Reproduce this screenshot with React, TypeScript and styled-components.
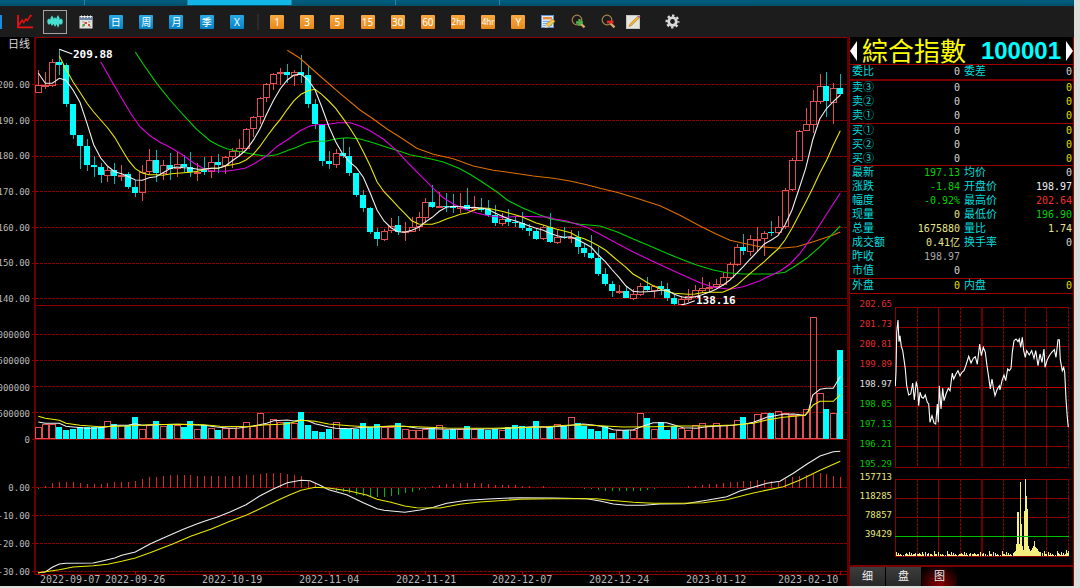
import React from 'react';
import styled, { createGlobalStyle, css } from 'styled-components';

const MONO = '"DejaVu Sans Mono", "Noto Sans CJK SC", monospace';
const CJK = '"Liberation Sans", "Noto Sans CJK SC", sans-serif';

const GlobalStyle = createGlobalStyle`
  *, *::before, *::after { box-sizing: border-box; }
  body { margin: 0; background: #dde1de; font-family: ${CJK}; }
  button { font: inherit; color: inherit; background: none; border: 0; padding: 0; cursor: pointer; }
`;

/* ---------- data ---------- */

type Kind = 'r' | 'c';
type Candle = [Kind, number, number, number, number];

// Direction, high, body top, body bottom, low; heights in thirds of a pixel.
const CANDLES: Candle[] = [
  ['r', 90, 136, 158, 158], ['r', 95, 135, 137, 147], ['r', 58, 67, 137, 140], ['c', 28, 66, 74, 105],
  ['c', 69, 75, 191, 201], ['c', 192, 192, 285, 297], ['c', 285, 285, 318, 386], ['c', 297, 317, 375, 392],
  ['c', 348, 375, 381, 411], ['c', 369, 380, 406, 429], ['r', 380, 390, 409, 427], ['c', 369, 390, 408, 432],
  ['r', 375, 404, 410, 422], ['c', 396, 402, 440, 448], ['c', 420, 441, 459, 470], ['r', 376, 395, 460, 482],
  ['r', 326, 361, 395, 405], ['c', 331, 360, 399, 425], ['r', 360, 376, 401, 419], ['c', 339, 375, 388, 419],
  ['r', 336, 373, 388, 410], ['c', 345, 373, 381, 395], ['c', 336, 381, 396, 410], ['r', 368, 396, 399, 424],
  ['c', 350, 387, 395, 405], ['r', 348, 367, 395, 414], ['c', 342, 365, 375, 399], ['r', 348, 350, 379, 402],
  ['r', 325, 332, 352, 385], ['r', 297, 324, 335, 350], ['r', 264, 268, 326, 330], ['r', 228, 232, 268, 292],
  ['r', 171, 175, 232, 251], ['r', 130, 133, 175, 185], ['r', 98, 101, 133, 150], ['r', 85, 97, 100, 136],
  ['c', 71, 96, 105, 130], ['r', 91, 97, 107, 138], ['c', 45, 96, 105, 130], ['c', 76, 105, 191, 203],
  ['c', 177, 191, 253, 267], ['c', 253, 253, 364, 378], ['c', 333, 364, 371, 386], ['r', 326, 340, 374, 383],
  ['c', 293, 339, 349, 355], ['c', 322, 349, 399, 408], ['c', 399, 399, 465, 470], ['c', 451, 465, 505, 516],
  ['c', 500, 505, 575, 581], ['c', 563, 575, 596, 617], ['r', 566, 573, 599, 602], ['r', 534, 557, 574, 578],
  ['c', 529, 556, 577, 585], ['r', 545, 574, 577, 602], ['r', 530, 560, 575, 577], ['r', 516, 532, 562, 573],
  ['r', 475, 487, 533, 548], ['c', 435, 486, 500, 505], ['r', 455, 497, 502, 503], ['c', 460, 497, 500, 517],
  ['c', 463, 499, 503, 520], ['r', 459, 497, 507, 518], ['c', 445, 495, 506, 510], ['r', 467, 502, 508, 512],
  ['c', 473, 504, 510, 516], ['c', 479, 507, 525, 530], ['c', 495, 524, 550, 557], ['r', 520, 537, 551, 558],
  ['c', 508, 538, 545, 557], ['c', 530, 545, 548, 560], ['c', 515, 548, 563, 570], ['c', 551, 563, 573, 587],
  ['c', 565, 572, 597, 600], ['r', 556, 560, 598, 600], ['c', 520, 560, 605, 608], ['r', 571, 591, 608, 613],
  ['c', 560, 591, 594, 598], ['r', 570, 590, 596, 608], ['c', 573, 591, 620, 642], ['c', 608, 623, 640, 651],
  ['c', 586, 640, 653, 657], ['c', 622, 654, 702, 707], ['c', 685, 702, 731, 738], ['c', 723, 731, 753, 771],
  ['r', 735, 752, 756, 762], ['c', 737, 752, 774, 775], ['r', 747, 762, 776, 780], ['r', 729, 737, 764, 768],
  ['c', 712, 737, 749, 753], ['r', 735, 739, 752, 773], ['c', 723, 739, 748, 764], ['c', 730, 748, 773, 782],
  ['c', 762, 774, 791, 796], ['r', 768, 778, 794, 795], ['r', 748, 768, 779, 785], ['r', 735, 750, 770, 775],
  ['r', 712, 745, 752, 758], ['r', 727, 741, 748, 755], ['r', 718, 732, 742, 745], ['r', 697, 712, 734, 738],
  ['r', 667, 672, 714, 718], ['r', 612, 622, 674, 678], ['c', 582, 622, 634, 645], ['r', 586, 598, 637, 648],
  ['r', 561, 596, 600, 635], ['r', 573, 578, 598, 648], ['c', 543, 576, 580, 588], ['r', 528, 560, 580, 586],
  ['r', 445, 449, 562, 568], ['r', 355, 361, 450, 452], ['r', 269, 272, 362, 362], ['r', 205, 253, 273, 273],
  ['r', 150, 184, 255, 279], ['r', 102, 138, 186, 192], ['c', 95, 137, 184, 231], ['r', 130, 145, 188, 252],
  ['c', 102, 144, 162, 165],
];

const VOLUMES = [
  382, 372, 371, 382, 390, 387, 382, 382, 382, 380, 364, 372, 376, 375, 350, 388, 376, 363, 378, 373,
  375, 381, 363, 388, 374, 385, 389, 385, 385, 377, 367, 378, 338, 373, 356, 366, 366, 370, 336, 374,
  394, 397, 386, 367, 385, 386, 387, 369, 382, 371, 382, 380, 369, 388, 391, 391, 388, 384, 374, 389,
  386, 387, 378, 388, 387, 390, 386, 389, 380, 376, 378, 382, 363, 377, 382, 371, 379, 352, 369, 379,
  387, 394, 378, 400, 391, 390, 389, 340, 355, 387, 366, 389, 379, 385, 390, 374, 370, 378, 370, 374,
  376, 361, 350, 368, 343, 340, 339, 334, 340, 345, 345, 328, 52, 278, 327, 340, 150,
];

const HISTOGRAM = [
  567, 558, 549, 545, 545, 546, 549, 552, 552, 552, 549, 547, 545, 545, 543, 537, 532, 531, 528, 526,
  526, 526, 526, 529, 529, 529, 529, 529, 529, 528, 526, 525, 521, 519, 519, 519, 521, 524, 529, 540,
  550, 558, 568, 572, 575, 579, 584, 588, 591, 591, 591, 588, 585, 580, 575, 571, 567, 558, 555, 552,
  551, 549, 549, 549, 549, 552, 555, 555, 555, 555, 558, 558, 562, 558, 562, 562, 562, 562, 562, 566,
  566, 569, 572, 573, 573, 573, 573, 573, 569, 566, 562, 562, 562, 562, 558, 558, 555, 552, 552, 549,
  546, 545, 542, 542, 540, 540, 543, 545, 537, 532, 527, 524, 520, 519, 521, 527, 532,
];

const MA5 = '115,99 136,130 157,130 178,115 198,121 219,150 240,187 261,250 281,314 302,354 323,379 344,395 365,401 386,410 406,420 427,421 447,413 468,410 489,398 509,386 530,381 551,383 572,384 593,388 613,387 634,385 655,385 676,378 696,363 717,348 738,330 759,302 779,268 800,222 821,180 841,146 862,120 882,105 903,102 924,119 945,149 965,200 986,258 1007,305 1027,340 1048,365 1069,383 1090,412 1111,460 1131,510 1152,543 1173,563 1194,575 1214,577 1235,571 1256,562 1277,545 1297,532 1318,514 1339,502 1360,499 1381,500 1401,503 1422,502 1443,504 1464,508 1485,519 1505,528 1526,537 1547,543 1567,550 1588,558 1609,565 1630,571 1650,580 1671,587 1692,592 1712,590 1733,600 1753,610 1774,622 1795,645 1816,665 1837,690 1857,712 1878,738 1899,754 1920,756 1940,755 1962,754 1982,751 2002,751 2023,763 2044,770 2065,774 2085,770 2106,764 2127,757 2148,748 2168,736 2189,721 2210,700 2230,680 2251,657 2272,635 2293,612 2314,600 2334,587 2355,555 2376,510 2397,447 2417,385 2438,300 2459,237 2480,205 2500,185 2521,165';
const MA10 = '178,48 198,88 219,125 240,157 261,190 281,216 302,240 323,264 344,292 365,328 386,362 406,386 427,399 447,404 468,404 489,406 509,402 530,400 551,398 572,397 593,394 613,388 634,385 655,385 676,378 696,374 717,370 738,360 759,344 779,320 800,290 821,262 841,238 862,208 882,182 903,163 924,152 945,148 965,163 986,183 1007,205 1027,232 1048,262 1069,295 1090,335 1111,378 1131,425 1152,455 1173,477 1194,500 1214,520 1235,542 1256,552 1277,553 1297,553 1318,546 1339,537 1360,530 1381,523 1401,519 1422,510 1443,504 1464,505 1485,509 1505,514 1526,519 1547,525 1567,531 1588,540 1609,549 1630,555 1650,562 1671,568 1692,573 1712,578 1733,590 1753,596 1774,606 1795,617 1816,630 1837,648 1857,665 1878,682 1899,702 1920,714 1940,727 1961,738 1982,748 2003,755 2023,760 2044,761 2065,763 2085,762 2106,758 2127,757 2168,757 2189,748 2210,736 2230,718 2251,700 2272,682 2293,665 2314,645 2334,627 2355,600 2376,565 2397,525 2417,487 2438,445 2459,400 2480,360 2500,315 2521,272';
const MA20 = '302,65 336,125 365,175 395,225 420,260 450,287 480,307 510,322 545,343 580,368 613,387 640,393 675,394 700,391 735,385 765,370 800,347 830,320 870,294 900,272 930,258 950,254 985,253 1015,248 1050,248 1080,258 1110,272 1150,297 1190,332 1230,375 1270,415 1300,445 1330,473 1360,492 1395,508 1430,519 1465,527 1500,532 1530,531 1560,529 1610,530 1645,531 1660,536 1700,543 1730,553 1760,562 1800,583 1850,610 1900,636 1950,660 2000,683 2050,706 2100,728 2140,742 2190,748 2230,740 2280,722 2340,693 2370,672 2400,640 2440,585 2480,522 2521,459';
const MA30 = '406,36 430,73 470,130 510,180 550,225 590,268 630,302 655,316 680,326 715,334 760,343 800,349 830,344 865,331 890,322 920,308 945,304 980,303 1010,296 1040,293 1080,297 1120,308 1160,322 1190,331 1230,344 1260,350 1290,356 1330,366 1375,384 1410,403 1450,428 1490,455 1525,482 1570,505 1610,521 1650,536 1700,546 1740,553 1800,558 1850,575 1900,597 1950,618 2000,640 2050,660 2090,675 2140,690 2180,698 2230,702 2320,702 2355,697 2380,682 2420,655 2460,620 2490,590 2521,558';
const MA60 = '862,31 900,55 960,108 1020,160 1080,210 1120,237 1160,266 1210,298 1250,325 1300,343 1360,356 1420,378 1480,391 1540,399 1600,408 1660,415 1710,423 1760,434 1800,445 1850,457 1910,475 1980,497 2040,526 2100,558 2150,583 2190,601 2240,612 2280,620 2340,625 2390,620 2440,605 2500,585 2521,576';
const VOL_MA5 = '115,366 136,370 178,370 198,379 219,381 261,385 290,384 323,380 344,376 386,375 406,371 427,376 468,374 530,373 572,374 613,376 650,381 690,385 717,384 759,378 779,374 800,370 821,362 862,360 882,363 903,360 924,362 945,371 965,376 986,381 1007,385 1048,386 1090,382 1131,381 1173,379 1214,379 1250,384 1300,386 1340,388 1500,386 1540,383 1600,380 1640,382 1700,377 1750,372 1780,375 1815,381 1840,389 1870,391 1900,389 1930,378 1960,368 2000,368 2020,374 2050,383 2090,385 2120,380 2180,377 2230,373 2260,367 2300,352 2350,343 2380,342 2415,346 2425,335 2438,285 2460,268 2480,265 2500,265 2521,229';
const VOL_MA10 = '115,349 136,355 178,361 198,370 240,376 300,380 380,378 450,374 540,373 610,374 660,379 740,380 790,375 840,373 862,371 903,361 945,364 986,372 1048,377 1110,381 1180,378 1250,380 1340,384 1480,385 1560,383 1640,380 1700,376 1740,374 1800,377 1870,381 1960,380 2040,378 2120,378 2200,375 2260,370 2300,360 2350,352 2415,346 2440,315 2460,304 2500,304 2521,284';
const DIF = '115,818 136,816 157,802 178,792 198,790 280,789 310,782 344,774 365,766 406,756 450,732 490,714 550,688 590,672 613,664 650,652 690,636 738,614 779,588 821,566 862,548 903,541 930,542 960,556 986,569 1040,584 1090,608 1131,626 1152,631 1214,637 1260,630 1300,622 1340,610 1400,601 1480,596 1560,593 1660,594 1760,596 1800,603 1840,612 1880,616 1930,616 1980,612 2055,611 2120,601 2180,590 2220,573 2260,562 2300,550 2340,544 2380,520 2420,493 2460,468 2500,455 2521,454';
const DEA = '115,818 136,815 178,809 219,801 280,797 323,793 365,784 406,774 450,758 520,731 572,709 634,687 690,664 740,645 780,626 830,602 870,584 903,571 945,562 986,564 1048,573 1100,585 1131,598 1173,607 1214,618 1250,623 1320,624 1380,613 1440,606 1560,598 1660,596 1790,596 1830,601 1900,607 1960,610 2050,610 2110,608 2180,599 2260,579 2350,560 2400,540 2460,511 2521,484';
const INTRADAY = '166,292 168,248 170,130 174,93 177,158 180,140 184,172 188,185 192,212 196,240 200,290 206,318 212,315 218,282 223,333 229,278 233,300 236,350 240,310 245,325 250,328 256,318 262,340 266,345 270,400 276,380 282,402 287,405 292,345 295,400 298,290 303,360 308,298 312,335 318,315 325,298 330,305 337,252 341,270 348,255 354,245 360,260 366,250 372,245 378,228 386,202 393,222 400,208 406,203 412,226 416,190 419,165 424,200 430,175 436,190 441,230 446,265 451,300 456,270 460,295 465,320 472,300 478,290 480,303 486,275 492,258 497,275 503,240 508,245 513,238 517,190 522,155 528,150 534,158 538,150 542,175 547,145 551,185 556,205 560,185 568,198 575,185 582,208 587,185 594,230 600,195 606,220 612,180 615,235 622,212 628,200 635,190 643,182 648,205 654,152 658,152 661,212 667,245 671,235 674,250 678,330 682,385 685,414';

// Traded volume by the minute: position and height in pixels.
const SPIKES: [number, number][] = [
  [118, 3], [119, 4], [120, 5], [121, 12], [122, 44], [123, 44], [124, 12], [125, 74], [126, 32], [127, 10], [128, 6],
  [129, 45], [130, 77], [131, 60], [132, 47], [133, 10], [134, 7], [135, 5], [136, 6], [137, 8], [138, 10],
  [139, 15], [140, 9], [141, 8], [142, 7], [143, 5], [144, 4], [145, 4], [147, 3], [149, 3], [171, 6], [173, 5],
];
const TICKS = [4, 2, 3, 1, 0, 2, 0, 1, 2, 2, 0, 2, 1, 2, 3, 0, 1, 5, 2, 0, 3, 1, 4];

/* ---------- chart helpers ---------- */

const PLOT_W = 815;
const PLOT_LEFT = 32;
const candleX = (i: number) => Math.round((115 + 20.74 * i) / 3 - PLOT_LEFT);
const place = (points: string, left: number, top: number) =>
  points
    .split(' ')
    .map((p) => {
      const [x, y] = p.split(',').map(Number);
      return `${(x / 3 - left).toFixed(1)},${(y / 3 + top).toFixed(1)}`;
    })
    .join(' ');

const RED = '#8c0000';
const UP = '#e05050';
const DOWN = '#00ffff';

const Plot = styled.svg<{ $h: number }>`
  display: block;
  width: 100%;
  height: ${(p) => p.$h}px;
  shape-rendering: crispEdges;
  & * { vector-effect: non-scaling-stroke; }
  & polyline { shape-rendering: auto; stroke-width: 1.1; }
`;

const Grid = ({ ys, width, from = 0 }: { ys: number[]; width: number; from?: number }) => (
  <g stroke={RED} strokeDasharray="3 1">
    {ys.map((y) => <line key={y} x1={from} x2={width} y1={y} y2={y} />)}
  </g>
);

const Curve = ({ d, color, top }: { d: string; color: string; top: number }) => (
  <polyline points={place(d, PLOT_LEFT, top)} fill="none" stroke={color} />
);

const PriceChart = () => {
  const top = 3;
  const y = (v: number) => Math.round(v / 3 + top);
  return (
    <Plot $h={269} viewBox={`0 0 ${PLOT_W} 269`} preserveAspectRatio="none" role="img" aria-label="日线">
      <Grid ys={[47.5, 83.5, 119.5, 154.5, 190.5, 226.5, 261.5]} width={PLOT_W} />
      <path d={`M3 .5H${PLOT_W}M3 268.5H${PLOT_W}`} stroke={RED} />
      <path d="M3 0V269" stroke="#6c0000" strokeWidth="2" />
      {CANDLES.map(([kind, hi, a, b, lo], i) => {
        const x = candleX(i);
        const bodyH = Math.max(1, y(b) - y(a));
        return kind === 'c' ? (
          <g key={i}>
            <path d={`M${x + 0.5} ${y(hi)}V${y(lo)}`} stroke="#00b8b8" />
            <rect x={x - 3} y={y(a)} width="6" height={bodyH} fill={DOWN} />
          </g>
        ) : (
          <g key={i} stroke={UP} fill="none">
            <path d={`M${x + 0.5} ${y(hi)}V${y(a)}M${x + 0.5} ${y(b)}V${y(lo)}`} />
            <rect x={x - 2.5} y={y(a) + 0.5} width="6" height={Math.max(0.5, bodyH - 1)} />
          </g>
        );
      })}
      <Curve d={MA60} color="#dc7000" top={top} />
      <Curve d={MA30} color="#00d000" top={top} />
      <Curve d={MA20} color="#e000e0" top={top} />
      <Curve d={MA10} color="#e8e800" top={top} />
      <Curve d={MA5} color="#f0f0f0" top={top} />
      <Curve d="178,28 217,42" color="#ffffff" top={top} />
      <Curve d="2044,794 2060,791 2084,782" color="#ffffff" top={top} />
    </Plot>
  );
};

const VolumeChart = () => (
  <Plot $h={134} viewBox={`0 0 ${PLOT_W} 134`} preserveAspectRatio="none" role="img" aria-label="成交量">
    <Grid ys={[28.5, 54.5, 80.5, 106.5]} width={PLOT_W} />
    <path d="M3 0V134" stroke="#6c0000" strokeWidth="2" />
    {VOLUMES.map((v, i) => {
      const x = candleX(i);
      const y = Math.round((v - 18) / 3);
      return CANDLES[i][0] === 'c' ? (
        <rect key={i} x={x - 3} y={y} width="6" height={133 - y} fill={DOWN} />
      ) : (
        <rect key={i} x={x - 2.5} y={y + 0.5} width="6" height={132 - y} fill="none" stroke={UP} />
      );
    })}
    <path d={`M0 133.5H${PLOT_W}`} stroke={RED} />
    <Curve d={VOL_MA5} color="#f0f0f0" top={-6} />
    <Curve d={VOL_MA10} color="#f0f000" top={-6} />
  </Plot>
);

const MacdChart = () => (
  <Plot $h={135} viewBox={`0 0 ${PLOT_W} 135`} preserveAspectRatio="none" role="img" aria-label="MACD">
    <Grid ys={[47.5, 75.5, 103.5, 131.5]} width={PLOT_W} />
    <path d="M3 0V135" stroke="#6c0000" strokeWidth="2" />
    {HISTOGRAM.map((v, i) => {
      if (v === 562) return null;
      const x = candleX(i) + 0.5;
      return <path key={i} d={`M${x} 47.5V${(v - 420) / 3}`} stroke={v > 562 ? '#00b400' : '#d82424'} />;
    })}
    <path d={`M3 134.5H${PLOT_W}`} stroke={RED} />
    {[0, 14, 28, 42, 56, 70, 84, 98, 116].map((i) => (
      <path key={i} d={`M${candleX(i) + 0.5} 131V135`} stroke="#b00000" />
    ))}
    <Curve d={DIF} color="#f0f0f0" top={-140} />
    <Curve d={DEA} color="#e8e800" top={-140} />
  </Plot>
);

const V_LINES = [22, 65, 108, 130, 151, 173];
const MINI_W = 174;

const MiniVerticals = ({ from, to }: { from: number; to: number }) => (
  <>
    <path d={V_LINES.map((x) => `M${x + 0.5} ${from}V${to}`).join('')} stroke={RED} strokeDasharray="3 1" />
    <path d={`M.5 ${from}V${to}M43.5 ${from}V${to}`} stroke={RED} />
    <path d={`M87 ${from}V${to}`} stroke="#6c0000" strokeWidth="2" />
  </>
);

const MiniPrice = () => (
  <Plot $h={170} viewBox={`0 0 ${MINI_W} 170`} preserveAspectRatio="none" role="img" aria-label="分时走势">
    <path d={[8, 28, 47, 67, 107, 127, 147, 168].map((y) => `M0 ${y + 0.5}H${MINI_W}`).join('')} stroke={RED} />
    <path d={`M0 88.5H${MINI_W}`} stroke="#c00000" />
    <MiniVerticals from={8} to={169} />
    <polyline points={place(INTRADAY, 55, -10)} fill="none" stroke="#ffffff" />
  </Plot>
);

const MiniVolume = () => (
  <Plot $h={90} viewBox={`0 0 ${MINI_W} 90`} preserveAspectRatio="none" role="img" aria-label="分时成交量">
    <path d={[10, 29, 48, 87].map((y) => `M0 ${y + 0.5}H${MINI_W}`).join('')} stroke={RED} />
    <MiniVerticals from={10} to={88} />
    <g fill="#f4f080">
      {Array.from({ length: 172 }, (_, i) => {
        const h = TICKS[(i * 7 + Math.floor(i / 9)) % TICKS.length];
        return h ? <rect key={i} x={i + 1} y={87 - h} width="1" height={h} /> : null;
      })}
      {SPIKES.map(([x, h], i) => <rect key={`s${i}`} x={x} y={87 - h} width="1" height={h} />)}
    </g>
    <path d={`M0 67.5H${MINI_W}`} stroke="#00c000" />
  </Plot>
);

/* ---------- page frame ---------- */

const Shell = styled.div`
  padding: 0 6px 2px 0;
  background: #dde1de;
`;

const Frame = styled.div`
  background: #000;
  overflow: hidden;
`;

const TabStrip = styled.div`
  display: flex;
  height: 6px;
  background: linear-gradient(#005f80, #004e68);
`;

const StripTab = styled.div<{ $w: number; $active?: boolean }>`
  width: ${(p) => p.$w}px;
  height: 5px;
  border-right: 1px solid #1e86ac;
  ${(p) => p.$active && css`background: #12b6e6;`}
`;

const Toolbar = styled.div`
  display: flex;
  align-items: center;
  height: 31px;
  background: #1c1c1c;
`;

const ToolGroup = styled.div<{ $w: number }>`
  display: flex;
  justify-content: space-between;
  width: ${(p) => p.$w}px;
  flex: none;
`;

const ClippedTool = styled.button`
  width: 2px;
  height: 14px;
  margin-right: 11px;
  background: #1c8be0;
`;

const Divider = styled.div`
  width: 2px;
  height: 16px;
  margin: 0 6px 0 8px;
  background: #2a2a2a;
`;

const ToolButton = styled.button<{ $on?: boolean; $push?: boolean }>`
  display: grid;
  place-items: center;
  flex: none;
  width: 24px;
  height: 24px;
  border: 1px solid ${(p) => (p.$on ? '#a4a4a4' : 'transparent')};
  ${(p) => p.$on && css`background: #242424;`}
  ${(p) => p.$push && css`margin-left: 15px;`}
  svg { display: block; }
`;

const Chip = styled.span<{ $tone: 'blue' | 'orange'; $small?: boolean }>`
  display: block;
  width: 14px;
  height: 14px;
  border-radius: 1px;
  background: ${(p) => (p.$tone === 'blue' ? 'linear-gradient(#2aaae4, #0583c4)' : 'linear-gradient(#f8a840, #e88a1c)')};
  color: #fff;
  font: ${(p) => (p.$small ? 8 : 10)}px/14px "Noto Sans", "Noto Sans CJK SC", sans-serif;
  text-align: center;
  white-space: nowrap;
`;

const Workspace = styled.main`
  display: grid;
  grid-template-columns: minmax(0, 1fr) 225px;
`;

const ChartArea = styled.section`
  display: grid;
  grid-template-columns: 32px minmax(0, 1fr);
  border-right: 2px solid #5c0000;
`;

const AxisColumn = styled.div`
  display: flex;
  flex-direction: column;
  overflow: hidden;
  padding-right: 2px;
  color: #b8b8b8;
  font: 9px/14px ${MONO};
`;

const PeriodName = styled.div`
  display: flex;
  justify-content: flex-end;
  margin-bottom: 27px;
  color: #d8d8d8;
  font: 11px/14px ${CJK};
`;

const Scale = styled.div<{ $h: number; $after?: number }>`
  display: flex;
  flex-direction: column;
  justify-content: space-between;
  align-items: flex-end;
  height: ${(p) => p.$h}px;
  margin-bottom: ${(p) => p.$after ?? 0}px;
`;

const Plots = styled.div`
  position: relative;
  min-width: 0;
`;

const Marker = styled.span<{ $x: number; $y: number }>`
  position: absolute;
  left: ${(p) => (p.$x / PLOT_W) * 100}%;
  top: ${(p) => p.$y}px;
  color: #fff;
  font: bold 11px/14px ${MONO};
`;

const Dates = styled.div`
  display: grid;
  grid-template-columns: 65fr 97fr 97fr 97fr 96fr 97fr 97fr 92fr 69fr;
  height: 11px;
  padding-left: 8px;
  color: #b8b8b8;
  font: 10px/9px ${MONO};
  white-space: nowrap;
`;

/* ---------- quote panel ---------- */

const Panel = styled.aside`
  display: flex;
  flex-direction: column;
  border-left: 1px solid #7a0000;
  border-right: 1px solid #a00000;
`;

const Title = styled.header`
  display: flex;
  align-items: center;
  justify-content: space-between;
  height: 28px;
  border-bottom: 1px solid #a00000;
`;

const Arrow = styled.button`
  width: 7px;
  svg { display: block; }
`;

const IndexName = styled.h1`
  height: 26px;
  margin: 0;
  color: #ffff00;
  font: 26px/23px "Noto Sans CJK TC", sans-serif;
`;

const IndexCode = styled.span`
  margin-left: 10px;
  color: #00ffff;
  font: bold 24px/26px "Liberation Sans", sans-serif;
`;

const Quotes = styled.dl<{ $thick?: boolean }>`
  display: grid;
  grid-template-columns: 1fr 1fr;
  column-gap: 4px;
  margin: 0;
  padding: 0 1px 0 2px;
  border-bottom: ${(p) => (p.$thick ? 2 : 1)}px solid ${(p) => (p.$thick ? '#780000' : '#a00000')};
`;

const Quote = styled.div`
  display: flex;
  justify-content: space-between;
  height: 14px;
`;

const QuoteName = styled.dt`
  color: #00dcdc;
  font: 11px/12px ${CJK};
`;

const QuoteValue = styled.dd<{ $color: string }>`
  margin: 0;
  color: ${(p) => p.$color};
  font: 10px/13px ${MONO};
`;

const Book = styled.table`
  width: 100%;
  table-layout: fixed;
  border-collapse: collapse;
  border-bottom: 1px solid #a00000;
`;

const BookSide = styled.th`
  width: 54px;
  height: 14px;
  padding: 0 0 0 2px;
  text-align: left;
  vertical-align: top;
  color: #00dcdc;
  font: 11px/12px ${CJK};
`;

const BookCell = styled.td<{ $color: string; $w?: number }>`
  ${(p) => p.$w && css`width: ${p.$w}px;`}
  padding: 0 1px 0 0;
  text-align: right;
  vertical-align: top;
  color: ${(p) => p.$color};
  font: 10px/13px ${MONO};
`;

const MiniRow = styled.div<{ $top: number }>`
  display: grid;
  grid-template-columns: 42px minmax(0, 1fr);
  column-gap: 3px;
  padding: ${(p) => p.$top}px 4px 0 0;
`;

const MiniScale = styled.div<{ $h: number; $top?: number }>`
  display: flex;
  flex-direction: column;
  justify-content: space-between;
  align-items: flex-end;
  height: ${(p) => p.$h}px;
  margin-top: ${(p) => p.$top ?? 0}px;
  color: #e8e880;
  font: 9px/10px ${MONO};
`;

const Tone = styled.span<{ $color: string }>`
  color: ${(p) => p.$color};
`;

const PanelTabs = styled.nav`
  display: flex;
  gap: 1px;
  margin-top: auto;
  border-top: 2px solid #780000;
`;

const PanelTab = styled.button<{ $active?: boolean }>`
  width: 35px;
  height: 19px;
  color: #f0f0f0;
  font: 11px/17px ${CJK};
  background: ${(p) => (p.$active ? 'radial-gradient(circle at 50% 100%, #8c0000, #000 90%)' : 'linear-gradient(#3c3c3c, #282828)')};
`;

/* ---------- icons ---------- */

const LineIcon = () => (
  <svg width="16" height="15" viewBox="0 0 16 15" fill="none" stroke="#f01010" strokeWidth="1.4">
    <path d="M1 1v12.4h15" strokeWidth="1.8" />
    <path d="M2 11l3.2-5 1.6 2.6 2-3.6 1.6 1.6 3.2-5.2 1 .8" />
  </svg>
);

const CandleIcon = () => (
  <svg width="16" height="15" viewBox="0 0 16 15" fill="#48e0d0">
    <path d="M2 4.500L3.600 6v3L2 11 .4 9V6zM5 1.500L6.600 4v5.500L5 12 3.400 9.500V4zM8 3l1.600 2.500V10L8 13 6.400 10V5.500zM11 1l1.600 3v6L11 14l-1.600-4V4zM14 4.500L15.600 6v3L14 11l-1.600-2V6z" />
  </svg>
);

const CalendarIcon = () => (
  <svg width="14" height="14" viewBox="0 0 14 14">
    <rect x=".5" y="1" width="13" height="12.5" fill="#e4e2dc" />
    <path d="M.5 2h13v3H.5z" fill="#6c84a4" />
    <path d="M2.500 .5v2.400M5.500 .5v2.400M8.500 .5v2.400M11.500 .5v2.400" stroke="#f0f0f0" />
    <path d="M3 7h2.500M9 6.800h2.500M3 11.500h2M10 11.500h2" stroke="#a0a0a0" strokeWidth="1.200" />
    <path d="M5.500 7h2.500v2H5.500zM9 9h2v2H9z" fill="#d04c38" />
    <path d="M3.500 9h2.500v2H3.500z" fill="#58a048" />
  </svg>
);

const FormIcon = () => (
  <svg width="15" height="14" viewBox="0 0 15 14">
    <rect x=".5" y=".5" width="12" height="12" fill="#d8e8fc" stroke="#5c94d8" />
    <path d="M2 2h9v2.400H2z" fill="#f08838" />
    <path d="M2 6.500h9M2 8.500h9M2 10.500h9" stroke="#78a8e0" />
    <path d="M5 9l3 3 6-5.500-2-2.500z" fill="#f0c84c" stroke="#a87820" strokeWidth=".6" />
    <path d="M5 9l3 3-4 1z" fill="#e8d8a0" />
  </svg>
);

const ZoomIcon = ({ plus }: { plus?: boolean }) => (
  <svg width="15" height="15" viewBox="0 0 15 15" fill="none">
    <circle cx="6" cy="6" r="4.800" stroke="#a88450" strokeWidth="1.200" />
    <path d="M9.500 9.500l4 3.800" stroke="#d8a868" strokeWidth="2.400" />
    {plus
      ? <path d="M8.500 5v7M5 8.500h7" stroke="#48b048" strokeWidth="2.400" />
      : <path d="M6 8h6.500" stroke="#f02828" strokeWidth="2.600" />}
  </svg>
);

const PencilIcon = () => (
  <svg width="15" height="14" viewBox="0 0 15 14">
    <rect x=".5" y=".5" width="13" height="13" fill="#e4e4e0" stroke="#c4c4c0" />
    <path d="M3 11.500L4 9 11.500 1.500l1.800 1.400L5.500 10.500z" fill="#f0b430" stroke="#a87018" strokeWidth=".5" />
    <path d="M11.500 1.500L13 .2l1.500 1.400-1.200 1.300z" fill="#b060b0" />
  </svg>
);

const GearIcon = () => (
  <svg width="15" height="15" viewBox="0 0 15 15" fill="none" stroke="#d8dadc">
    <circle cx="7.500" cy="7.500" r="3.800" strokeWidth="2.800" />
    <circle cx="7.500" cy="7.500" r="5.900" strokeWidth="2.200" strokeDasharray="2.400 2.234" strokeDashoffset="1.200" />
  </svg>
);

/* ---------- content ---------- */

const DAY_CHIPS = ['日', '周', '月', '季', 'X'];
const MINUTE_CHIPS = ['1', '3', '5', '15', '30', '60', '2hr', '4hr', 'Y'];
const DATES = ['2022-09-07', '2022-09-26', '2022-10-19', '2022-11-04', '2022-11-21', '2022-12-07', '2022-12-24', '2023-01-12', '2023-02-10'];

const WHITE = '#d8d8d8';
const GREEN = '#00d000';
const YELLOW = '#e0e000';
const CREAM = '#e4e490';

const DETAILS: ([string, string, string] | null)[] = [
  ['最新', '197.13', GREEN], ['均价', '0', WHITE],
  ['涨跌', '-1.84', GREEN], ['开盘价', '198.97', '#f0f0f0'],
  ['幅度', '-0.92%', GREEN], ['最高价', '202.64', '#f03030'],
  ['现量', '0', CREAM], ['最低价', '196.90', GREEN],
  ['总量', '1675880', CREAM], ['量比', '1.74', CREAM],
  ['成交额', '0.41亿', CREAM], ['换手率', '0', WHITE],
  ['昨收', '198.97', '#a8a8a8'], null,
  ['市值', '0', WHITE], null,
];

const QuoteList = ({ items, thick }: { items: typeof DETAILS; thick?: boolean }) => (
  <Quotes $thick={thick}>
    {items.map((q, i) => (
      <Quote key={i}>
        {q && <QuoteName>{q[0]}</QuoteName>}
        {q && <QuoteValue $color={q[2]}>{q[1]}</QuoteValue>}
      </Quote>
    ))}
  </Quotes>
);

const OrderBook = ({ sides }: { sides: string[] }) => (
  <Book>
    <tbody>
      {sides.map((s) => (
        <tr key={s}>
          <BookSide scope="row">{s}</BookSide>
          <BookCell $color={WHITE} $w={57}>0</BookCell>
          <BookCell $color={YELLOW}>0</BookCell>
        </tr>
      ))}
    </tbody>
  </Book>
);

const MINI_PRICES = ['202.65', '201.73', '200.81', '199.89', '198.97', '198.05', '197.13', '196.21', '195.29'];

export default function App() {
  return (
    <Shell>
      <GlobalStyle />
      <Frame>
        <TabStrip>
          <StripTab $w={85} />
          <StripTab $w={103} />
          <StripTab $w={104} $active />
          <StripTab $w={104} />
          <StripTab $w={104} />
        </TabStrip>
        <Toolbar role="toolbar">
          <ClippedTool aria-label="更多" />
          <ToolGroup $w={236}>
            <ToolButton aria-label="分时图"><LineIcon /></ToolButton>
            <ToolButton aria-label="K线图" $on><CandleIcon /></ToolButton>
            <ToolButton aria-label="日历"><CalendarIcon /></ToolButton>
            {DAY_CHIPS.map((c) => <ToolButton key={c}><Chip $tone="blue">{c}</Chip></ToolButton>)}
          </ToolGroup>
          <Divider />
          <ToolGroup $w={356}>
            {MINUTE_CHIPS.map((c) => (
              <ToolButton key={c}><Chip $tone="orange" $small={c.length > 2}>{c}</Chip></ToolButton>
            ))}
            <ToolButton aria-label="编辑"><FormIcon /></ToolButton>
            <ToolButton aria-label="放大"><ZoomIcon plus /></ToolButton>
            <ToolButton aria-label="缩小"><ZoomIcon /></ToolButton>
          </ToolGroup>
          <ToolButton aria-label="画线"><PencilIcon /></ToolButton>
          <ToolButton aria-label="设置" $push><GearIcon /></ToolButton>
        </Toolbar>
        <Workspace>
          <ChartArea>
            <AxisColumn>
              <PeriodName>日线</PeriodName>
              <Scale $h={228} $after={22}>
                {['200.00', '190.00', '180.00', '170.00', '160.00', '150.00', '140.00'].map((t) => <span key={t}>{t}</span>)}
              </Scale>
              <Scale $h={119} $after={34}>
                {['2000000', '1500000', '1000000', '500000', '0'].map((t) => <span key={t}>{t}</span>)}
              </Scale>
              <Scale $h={98}>
                {['0.00', '-10.00', '-20.00', '-30.00'].map((t) => <span key={t}>{t}</span>)}
              </Scale>
            </AxisColumn>
            <Plots>
              <PriceChart />
              <VolumeChart />
              <MacdChart />
              <Dates>{DATES.map((d) => <span key={d}>{d}</span>)}</Dates>
              <Marker $x={41} $y={11}>209.88</Marker>
              <Marker $x={664} $y={257}>138.16</Marker>
            </Plots>
          </ChartArea>
          <Panel>
            <Title>
              <Arrow aria-label="上一个">
                <svg width="7" height="20" viewBox="0 0 7 20"><path d="M7 0v20L0 10z" fill="#fff" /></svg>
              </Arrow>
              <IndexName>綜合指數</IndexName>
              <IndexCode>100001</IndexCode>
              <Arrow aria-label="下一个">
                <svg width="7" height="20" viewBox="0 0 7 20"><path d="M0 0v20l7-10z" fill="#fff" /></svg>
              </Arrow>
            </Title>
            <QuoteList thick items={[['委比', '0', WHITE], ['委差', '0', WHITE]]} />
            <OrderBook sides={['卖③', '卖②', '卖①']} />
            <OrderBook sides={['买①', '买②', '买③']} />
            <QuoteList items={DETAILS} />
            <QuoteList items={[['外盘', '0', YELLOW], ['内盘', '0', YELLOW]]} />
            <MiniRow $top={5}>
              <MiniScale $h={170}>
                {MINI_PRICES.map((t, i) => (
                  <Tone key={t} $color={i < 4 ? '#e02c2c' : i === 4 ? '#e0e0e0' : '#00c800'}>{t}</Tone>
                ))}
              </MiniScale>
              <MiniPrice />
            </MiniRow>
            <MiniRow $top={0}>
              <MiniScale $h={67} $top={3}>
                {['157713', '118285', '78857', '39429'].map((t) => <span key={t}>{t}</span>)}
              </MiniScale>
              <MiniVolume />
            </MiniRow>
            <PanelTabs>
              <PanelTab>细</PanelTab>
              <PanelTab>盘</PanelTab>
              <PanelTab $active>图</PanelTab>
            </PanelTabs>
          </Panel>
        </Workspace>
      </Frame>
    </Shell>
  );
}
